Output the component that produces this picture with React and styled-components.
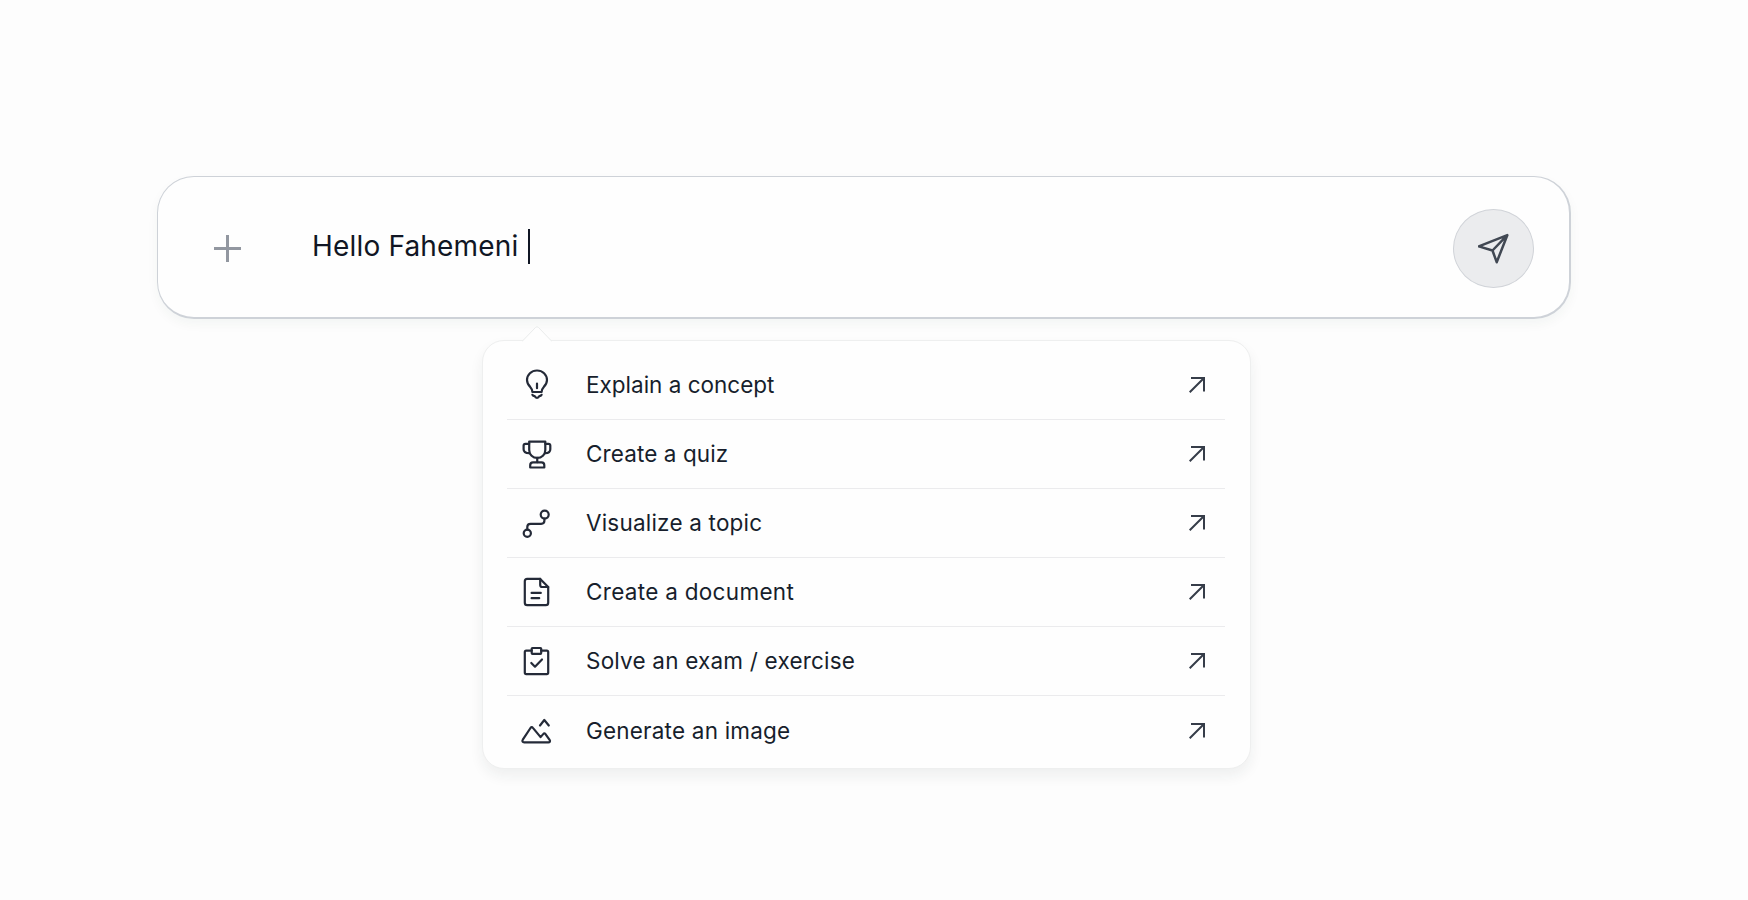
import React, { useState } from 'react';
import styled, { createGlobalStyle } from 'styled-components';

const ideas = [
  { icon: 'bulb', label: 'Explain a concept', tracking: 0 },
  { icon: 'trophy', label: 'Create a quiz', tracking: 0.1 },
  { icon: 'route', label: 'Visualize a topic', tracking: 0.2 },
  { icon: 'document', label: 'Create a document', tracking: 0.3 },
  { icon: 'exam', label: 'Solve an exam / exercise', tracking: 0.2 },
  { icon: 'image', label: 'Generate an image', tracking: 0.2 },
];

const iconShapes = {
  bulb: (
    <>
      <path d="M10.400 22c0-2.200-.8-3.600-2.200-5.100A9.800 9.800 0 0 1 5 10a10 9.500 0 0 1 20 0 9.800 9.800 0 0 1-3.200 6.900c-1.400 1.500-2.200 2.900-2.200 5.100z" />
      <path d="M15 13.600v4.600M10.400 24.800c.5 1 1.300 1.300 2.300 1.400.5 1.200 1.300 1.700 2.300 1.700s1.800-.5 2.300-1.700c1-.1 1.800-.4 2.300-1.400" />
    </>
  ),
  trophy: (
    <>
      <path d="M7.200 2.600h16.100v8.300c0 4.800-3.700 8-8.050 8s-8.050-3.200-8.050-8z" />
      <path d="M7.200 4.800H3.400c-1.200 0-1.800.7-1.800 1.800v3.600c0 2.600 2 3.900 5.600 3.900M23.300 4.800h3.200c1.200 0 1.800.7 1.800 1.800v3.600c0 2.600-1.600 3.900-5 3.900M15.250 18.900v4.300" />
      <path d="M11 23.300h8.500c1.800 0 2.800 1.200 2.800 3v2.200H8.200v-2.200c0-1.800 1-3 2.800-3z" />
    </>
  ),
  route: (
    <>
      <circle cx="5.300" cy="25.200" r="3.600" />
      <circle cx="22.700" cy="6.600" r="4" />
      <path d="M5.300 21.600v-2.500c0-2.200 1-3.300 3.200-3.300h10.700c2.200 0 3.200-1 3.200-3v-2.200" />
    </>
  ),
  document: (
    <>
      <path d="M18.200 1.900H5.200c-1.600 0-2.400.8-2.400 2.400v21.500c0 1.600.8 2.400 2.400 2.400h18.600c1.600 0 2.400-.8 2.400-2.400V10z" />
      <path d="M18.200 1.900V8c0 1.300.7 2 2 2h6M9.600 15.900h9.200M9.600 21.200h7.600" />
    </>
  ),
  exam: (
    <>
      <path d="M9.700 4.600H4.200c-1 0-1.400.5-1.400 1.400v20.600c0 1 .5 1.500 1.400 1.500h20.600c1 0 1.400-.5 1.400-1.500V6c0-.9-.4-1.400-1.400-1.400h-5.600" />
      <rect x="9.700" y="2" width="9.500" height="5.800" rx=".8" />
      <path d="m9.300 17 3.700 3.700 7-7.200" />
    </>
  ),
  image: (
    <>
      <path d="M9.700 11.200c-.5 0-.8.300-1.200.8L.8 23.700c-.9 1.500-.3 2.700 1.400 2.700h24c1.700 0 2.300-1.200 1.400-2.500l-4.300-6c-.6-.8-1.300-.8-1.900 0l-2.800 3.200-7.700-9.200c-.4-.5-.8-.7-1.200-.7z" />
      <path d="m18 9.500 4.300-5.500 4.500 5.500" />
    </>
  ),
};

const App = () => {
  const [message] = useState('Hello Fahemeni');

  return (
    <>
      <GlobalStyle />
      <Page>
        <PromptBar>
          <AddButton aria-label="Add attachment">
            <svg width="27" height="27" viewBox="0 0 27 27">
              <path d="M13.500 0v27M0 13.500h27" stroke="#9297a0" strokeWidth="3" />
            </svg>
          </AddButton>
          <Message>{message}</Message>
          <Caret />
          <SendButton aria-label="Send">
            <svg width="32" height="32" viewBox="0 0 32 32">
              <path d="M29.300 3.200.8 14.400l13.700 4.100 4.200 11.700zM14.500 18.500 29.300 3.200" />
            </svg>
          </SendButton>
        </PromptBar>
        <IdeaMenu>
          <Pointer width="30" height="16" viewBox="0 0 30 16">
            <path d="M0 15.500 13.500 1.500q1.500-1.500 3 0L30 15.500" />
          </Pointer>
          {ideas.map(({ icon, label, tracking }) => (
            <IdeaRow key={icon}>
              <IdeaIcon viewBox="0 0 30 30">{iconShapes[icon]}</IdeaIcon>
              <IdeaLabel $tracking={tracking}>{label}</IdeaLabel>
              <OpenIcon viewBox="0 0 16 16">
                <path d="M.7 15.300 15 1M2 1h13v13.500" />
              </OpenIcon>
            </IdeaRow>
          ))}
        </IdeaMenu>
      </Page>
    </>
  );
};

const GlobalStyle = createGlobalStyle`
  * {
    box-sizing: border-box;
  }

  body {
    margin: 0;
    background: #fdfdfd;
    font-family: Inter, 'Liberation Sans', sans-serif;
  }

  button {
    padding: 0;
    border: 0;
    background: none;
  }
`;

const Page = styled.main`
  display: flex;
  flex-direction: column;
  height: 900px;
  padding: 176px 177px 0 157px;
  overflow: hidden;
`;

const PromptBar = styled.section`
  display: flex;
  align-items: center;
  height: 143px;
  padding: 0 35px 0 56px;
  border: 1px solid #ced2d8;
  border-right-width: 2px;
  border-bottom-width: 2px;
  border-radius: 37px;
  background: #fefefe;
  box-shadow: 0 5px 12px rgba(30, 60, 50, 0.045);
`;

const AddButton = styled.button`
  display: flex;
  width: 27px;
  height: 27px;
  margin-top: 3px;
`;

const Message = styled.span`
  width: 206px;
  margin-left: 71px;
  margin-top: -2px;
  color: #101624;
  font-size: 28px;
  line-height: 36px;
  letter-spacing: 0.17px;
  white-space: nowrap;
`;

const Caret = styled.span`
  width: 2px;
  height: 35px;
  margin: -2px auto 0 10px;
  background: #101624;
`;

const SendButton = styled.button`
  display: flex;
  align-items: center;
  justify-content: center;
  width: 81px;
  height: 79px;
  margin-top: 2px;

  && {
    border: 1px solid #d0d3d8;
    border-radius: 50%;
    background: #ebecee;
  }

  path {
    fill: none;
    stroke: #414853;
    stroke-width: 2.5;
    stroke-linecap: round;
    stroke-linejoin: round;
  }
`;

const IdeaMenu = styled.section`
  position: relative;
  display: flex;
  flex-direction: column;
  width: 769px;
  height: 429px;
  margin: 21px 0 0 325px;
  padding: 9px 25px 0 24px;
  border: 1px solid #eeefef;
  border-radius: 22px;
  background: #fefefe;
  box-shadow: 0 7px 14px rgba(25, 45, 45, 0.065);
`;

const Pointer = styled.svg`
  position: absolute;
  top: -15px;
  left: 39px;
  fill: #fefefe;
  stroke: #e9ebeb;
`;

const IdeaRow = styled.div`
  display: flex;
  align-items: center;
  height: 69.1px;
  padding: 0 20px 0 15px;

  & + & {
    border-top: 1px solid #ebebed;
  }
`;

const IdeaIcon = styled.svg`
  width: 30px;
  height: 30px;
  overflow: visible;
  fill: none;
  stroke: #242a38;
  stroke-width: 2.2;
  stroke-linecap: round;
  stroke-linejoin: round;
`;

const IdeaLabel = styled.span`
  margin-left: 34px;
  color: #171e2c;
  font-size: 22.5px;
  line-height: 30px;
  letter-spacing: ${({ $tracking }) => $tracking}px;
  white-space: nowrap;
`;

const OpenIcon = styled.svg`
  width: 16px;
  height: 16px;
  margin-left: auto;
  fill: none;
  stroke: #363d49;
  stroke-width: 2;
`;

export default App;
